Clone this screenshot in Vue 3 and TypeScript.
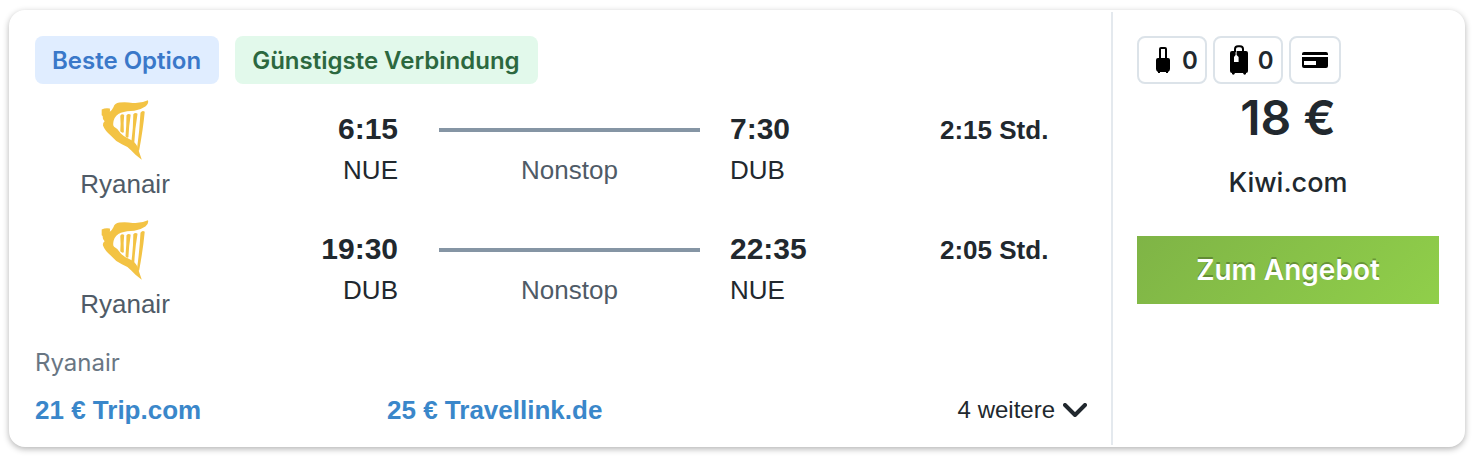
<script setup lang="ts">
interface Leg {
  airline: string
  departure: string
  origin: string
  stops: string
  arrival: string
  destination: string
  duration: string
}

const legs: Leg[] = [
  { airline: 'Ryanair', departure: '6:15', origin: 'NUE', stops: 'Nonstop', arrival: '7:30', destination: 'DUB', duration: '2:15 Std.' },
  { airline: 'Ryanair', departure: '19:30', origin: 'DUB', stops: 'Nonstop', arrival: '22:35', destination: 'NUE', duration: '2:05 Std.' },
]

const offers: string[] = ['21 € Trip.com', '25 € Travellink.de']
</script>

<template>
  <article class="card">
    <section class="trip">
      <div class="badges">
        <span class="badge best">Beste Option</span>
        <span class="badge cheapest">Günstigste Verbindung</span>
      </div>

      <div class="legs">
        <div v-for="leg in legs" :key="leg.departure" class="leg">
          <div class="airline">
            <svg class="harp" viewBox="300 298 147 184" aria-hidden="true">
              <path d="M302 327 Q314 321 327 324 Q328 329 327 334 Q334 329 338 320 Q342 308 356 306 Q376 304 397 307 Q424 309 444 299 Q447 310 436 318 Q422 328 402 331 Q378 331 361 337 Q344 344 339 360 Q335 375 340 380 Q351 385 360 400 Q370 411 385 417 Q404 426 411 440 Q416 456 425 481 Q404 466 392 452 Q380 440 364 434 Q345 425 332 409 Q311 391 306 376 Q304 369 311 363 Q304 357 305 347 L302 345 Z" />
              <path d="M359 346 Q364 339 371 344 Q368 368 370 397 Q365 401 359 394 Q361 370 359 346 Z" />
              <path d="M378 345 Q384 338 391 343 Q385 380 384 412 Q379 416 375 409 Q378 376 378 345 Z" />
              <path d="M399 342 Q405 335 412 340 Q404 386 402 429 Q397 433 393 426 Q399 382 399 342 Z" />
              <path d="M421 337 Q427 328 434 334 Q429 388 417 452 Q413 456 410 450 Q418 394 421 337 Z" />
            </svg>
            <span class="airline-name">{{ leg.airline }}</span>
          </div>
          <div class="stop departure">
            <time class="time">{{ leg.departure }}</time>
            <span class="code">{{ leg.origin }}</span>
          </div>
          <div class="route">
            <div class="track"><div class="line"></div></div>
            <span class="stops">{{ leg.stops }}</span>
          </div>
          <div class="stop">
            <time class="time">{{ leg.arrival }}</time>
            <span class="code">{{ leg.destination }}</span>
          </div>
          <div class="duration">{{ leg.duration }}</div>
        </div>
      </div>

      <div class="operator">Ryanair</div>
      <div class="offers">
        <a v-for="offer in offers" :key="offer" href="#" class="offer">{{ offer }}</a>
        <button type="button" class="more">
          4 weitere
          <svg class="chevron" viewBox="0 0 24 14" aria-hidden="true">
            <path d="M2 2 L12 12 L22 2" />
          </svg>
        </button>
      </div>
    </section>

    <aside class="deal">
      <div class="chips">
        <span class="chip">
          <svg class="cabin" viewBox="0 0 14 26" aria-hidden="true">
            <path class="handle" d="M4 12 V2 Q4 1 5 1 H9 Q10 1 10 2 V12" />
            <path d="M2 11 H12 Q14 11 14 13 V22 Q14 24 12 25 V26 H10 V25 H4 V26 H2 V25 Q0 24 0 22 V13 Q0 11 2 11 Z" />
          </svg>
          0
        </span>
        <span class="chip">
          <svg class="suitcase" viewBox="0 0 18 30" aria-hidden="true">
            <path class="handle" d="M5 7 V4 Q5 1.2 8 1.2 H10 Q13 1.2 13 4 V6" />
            <path fill-rule="evenodd" d="M2 6 H16 Q18 6 18 8 V26 Q18 28 16 28 V29 Q14 31 13 28 H5 Q4 31 2 29 V28 Q0 28 0 26 V8 Q0 6 2 6 Z M5.6 6 V10 L4 12 V17 H8.6 V12 L6.6 10 V6 Z" />
          </svg>
          0
        </span>
        <span class="chip">
          <svg class="credit" viewBox="0 0 26 16" aria-hidden="true">
            <path d="M2 0 H24 Q26 0 26 2 V3 H0 V2 Q0 0 2 0 Z" />
            <path fill-rule="evenodd" d="M0 5 H26 V14 Q26 16 24 16 H2 Q0 16 0 14 Z M2 9 V13 H14 V9 Z" />
          </svg>
        </span>
      </div>
      <div class="price">18 €</div>
      <div class="seller">Kiwi.com</div>
      <button type="button" class="book">Zum Angebot</button>
    </aside>
  </article>
</template>

<style>
body {
  background: #fff;
}
</style>

<style scoped>
.card {
  display: flex;
  box-sizing: border-box;
  margin: 10px 9px;
  border: 2px solid #fff;
  border-radius: 16px;
  background: #fff;
  box-shadow: 0 2px 6px rgba(0, 0, 0, 0.3);
  color: #21282e;
  font-family: "Liberation Sans", Arial, sans-serif;
}

.trip {
  flex: 1;
  min-width: 0;
  padding: 24px 24px 19px;
}

.badges {
  display: flex;
  gap: 16px;
}

.badge {
  padding: 2px 18px 0 17px;
  border-radius: 8px;
  font: 600 24px/46px Inter, sans-serif;
  white-space: nowrap;
}

.best {
  background: #e0edff;
  color: #3a78c9;
}

.cheapest {
  background: #e2f9eb;
  color: #2c683f;
}

.legs {
  padding-top: 8px;
}

.leg {
  display: grid;
  grid-template-columns: 180fr 183fr 332fr 210fr 147fr;
  height: 120px;
}

.airline {
  display: flex;
  flex-direction: column;
  align-items: center;
  gap: 8px;
  padding-top: 8px;
}

.harp {
  width: 48px;
  height: 60px;
  fill: #f3c344;
}

.airline-name {
  color: #4f5b67;
  font-size: 26px;
  line-height: 32px;
}

.stop {
  display: flex;
  flex-direction: column;
  padding-top: 18px;
}

.departure {
  align-items: flex-end;
}

.time {
  font-size: 30px;
  font-weight: 700;
  line-height: 38px;
}

.code {
  font-size: 26px;
  line-height: 44px;
}

.stops {
  font-size: 26px;
  line-height: 40px;
}

.route {
  display: flex;
  flex-direction: column;
  padding: 18px 30px 0 41px;
  color: #4f5b67;
  text-align: center;
}

.track {
  display: flex;
  align-items: center;
  height: 40px;
}

.line {
  flex: 1;
  height: 4px;
  background: #8595a4;
}

.duration {
  padding-top: 18px;
  font-size: 26px;
  font-weight: 700;
  line-height: 40px;
  white-space: nowrap;
}

.operator {
  padding-top: 15px;
  color: #697683;
  font: 400 24px/32px Inter, sans-serif;
}

.offers {
  display: grid;
  grid-template-columns: 1fr 1fr 1fr;
  gap: 4px;
  padding-top: 15px;
}

.offer {
  color: #3a87ca;
  font-size: 26px;
  font-weight: 700;
  line-height: 32px;
  text-decoration: none;
  white-space: nowrap;
}

.more {
  display: flex;
  align-items: center;
  justify-self: end;
  gap: 8px;
  padding: 0;
  border: 0;
  background: none;
  color: inherit;
  font: 400 24px/32px "Liberation Sans", Arial, sans-serif;
  cursor: pointer;
}

.chevron {
  width: 24px;
  height: 14px;
  fill: none;
  stroke: currentColor;
  stroke-width: 4;
  stroke-linecap: round;
  stroke-linejoin: round;
}

.deal {
  display: flex;
  flex: 0 0 352px;
  flex-direction: column;
  box-sizing: border-box;
  padding: 24px;
  border-left: 2px solid #e4e9ee;
  font-family: Inter, sans-serif;
  text-align: center;
}

.chips {
  display: flex;
  gap: 6px;
}

.chip {
  display: flex;
  align-items: center;
  box-sizing: border-box;
  min-width: 52px;
  height: 48px;
  padding: 0 7px 0 11px;
  border: 2px solid #dce3e9;
  border-radius: 8px;
  font-size: 24px;
  font-weight: 600;
}

.cabin {
  width: 14px;
  height: 26px;
  margin: 0 12px 0 6px;
}

.suitcase {
  width: 18px;
  height: 30px;
  margin: 0 10px 0 4px;
}

.credit {
  width: 26px;
  height: 16px;
}

.handle {
  fill: none;
  stroke: #000;
  stroke-width: 2;
}

.price {
  font-size: 48px;
  font-weight: 600;
  line-height: 68px;
}

.seller {
  padding-top: 14px;
  font-size: 27px;
  font-weight: 500;
  line-height: 34px;
}

.book {
  height: 68px;
  margin-top: 36px;
  padding: 0;
  border: 0;
  background: linear-gradient(135deg, #7fb446, #90cf4a);
  color: #fff;
  font: 600 28px/68px Inter, sans-serif;
  text-shadow: 0 -2px 0 rgba(0, 0, 0, 0.25);
  cursor: pointer;
}
</style>
